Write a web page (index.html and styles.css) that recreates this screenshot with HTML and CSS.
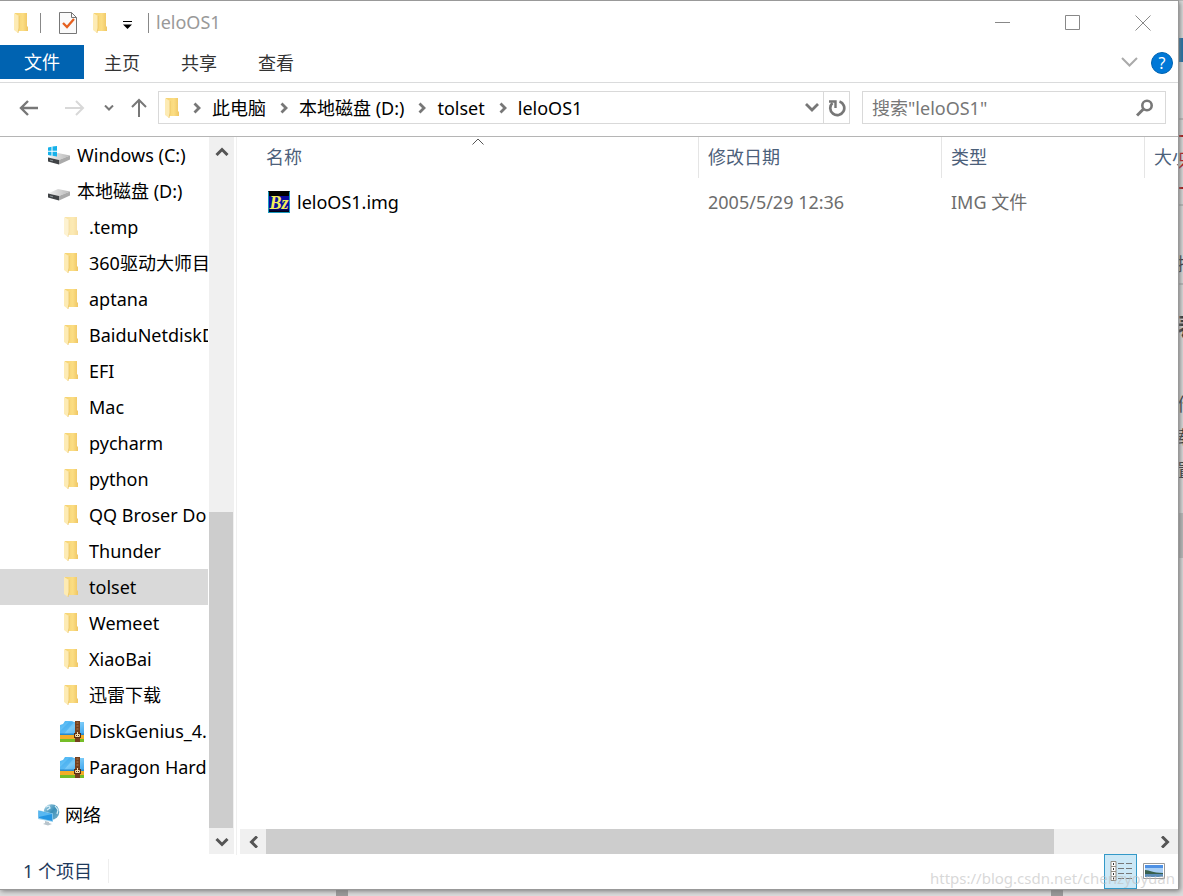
FILE: index.html
```html
<!DOCTYPE html>
<html lang="zh-CN">
<head>
<meta charset="utf-8">
<title>leloOS1</title>
<link rel="stylesheet" href="styles.css">
</head>
<body>
<svg class="defs" aria-hidden="true">
  <defs>
    <linearGradient id="gold" x1="0" x2="1"><stop offset="0" stop-color="#f5d272"/><stop offset=".6" stop-color="#fbdd83"/><stop offset="1" stop-color="#efc664"/></linearGradient>
    <linearGradient id="metal" x1="0" x2="1"><stop offset="0" stop-color="#f1f1f1"/><stop offset="1" stop-color="#b9b9b9"/></linearGradient>
    <linearGradient id="sky" x1="0" x2="1" y2="1"><stop offset="0" stop-color="#43b1f2"/><stop offset=".5" stop-color="#7bcbf8"/><stop offset="1" stop-color="#3aa2ec"/></linearGradient>
    <linearGradient id="globe" x1="0" x2="1" y2="1"><stop offset="0" stop-color="#b8dceb"/><stop offset=".5" stop-color="#3b8fb8"/><stop offset="1" stop-color="#7fb4cc"/></linearGradient>
  </defs>
  <symbol id="folder" viewBox="0 0 14 22"><path d="M1 1h12v13l1 1v4H4L1 17z" fill="url(#gold)"/><path d="M0 1l5 3v12l-1 5-4-3z" fill="#fdebb4"/><path d="M5 4v12l-1 5" fill="none" stroke="#eac15d" stroke-width=".7"/></symbol>
  <symbol id="drive" viewBox="0 0 22 24"><path d="M0 14.500 10 10l12 2.500L11 17z" fill="url(#metal)"/><path d="M0 14.500 11 17v4.500L0 18.500z" fill="#404346"/><path d="M11 17l11-4.500v4L11 21.500z" fill="#aaa"/><path d="M2 17l3 .8" stroke="#8a9398"/></symbol>
  <symbol id="archive" viewBox="0 0 24 22"><path d="M0 5l3-1 2-3h7l2 1h10v13H0z" fill="url(#sky)"/><path d="M0 11 9 2h5L4 14H0z" fill="#2da0ec" opacity=".4"/><path d="M0 13.500h24V16H0z" fill="#2489cf"/><path d="M0 15h24v4H0z" fill="#f3ad28"/><path d="M0 19h24v3H0z" fill="#75bd28"/><path d="M15 1h5v21h-5z" fill="#74401f"/><path d="M16.500 3h2M16.500 6h2M16.500 9h2" stroke="#b28053"/><path d="M14 13h7v5h-7z" fill="#5a2d13"/><path d="M15.500 14.500h4v2h-4zM17.500 12v5" fill="none" stroke="#f5e0b0"/></symbol>
  <symbol id="crumb" viewBox="0 0 8 12"><path d="M1.500 1.500 6 6l-4.500 4.500" fill="none" stroke="#777" stroke-width="2.800"/></symbol>
</svg>

<div class="backdrop" aria-hidden="true">
  <i class="shade shade-a"></i><i class="shade shade-b"></i><i class="shade shade-c"></i><i class="shade shade-d"></i><i class="shade shade-e"></i>
  <i class="shade shade-f"></i><i class="shade shade-g"></i><i class="shade shade-h"></i><i class="shade shade-i"></i>
  <span class="scrap scrap-red">只</span><span class="scrap scrap-a">描</span><span class="scrap scrap-b">表</span><span class="scrap scrap-c">作</span><span class="scrap scrap-d">载</span><span class="scrap scrap-e">置</span>
</div>

<div class="window">
  <header class="titlebar">
    <svg class="i-folder"><use href="#folder"/></svg>
    <span class="bar bar-left"></span>
    <button class="plain props" aria-label="属性"><svg width="18" height="22" viewBox="0 0 18 22"><path d="M.5.500h12l5 5v16H.500z" fill="#fafafa" stroke="#777"/><path d="M12.500.5v5h5" fill="none" stroke="#777"/><path d="M4 11l4 4 7-8" fill="none" stroke="#e6601f" stroke-width="2.300"/></svg></button>
    <button class="plain newdir" aria-label="新建文件夹"><svg class="i-folder"><use href="#folder"/></svg></button>
    <button class="plain qat" aria-label="自定义快速访问工具栏"><svg width="9" height="8" viewBox="0 0 9 8"><path d="M0 .5h9" stroke="#000"/><path d="M0 3.500h9L4.500 8z"/></svg></button>
    <span class="bar bar-title"></span>
    <h1 class="title">leloOS1</h1>
    <div class="caption">
      <button class="plain" aria-label="最小化"><svg width="16" height="16" viewBox="0 0 16 16"><path d="M0 7.500h15" stroke="#888"/></svg></button>
      <button class="plain" aria-label="最大化"><svg width="16" height="16" viewBox="0 0 16 16"><path d="M.5.500h14v14H.500z" fill="none" stroke="#888"/></svg></button>
      <button class="plain" aria-label="关闭"><svg width="16" height="16" viewBox="0 0 16 16"><path d="M.5.500l15 15m0-15-15 15" stroke="#888"/></svg></button>
    </div>
  </header>

  <nav class="ribbon">
    <button class="tab tab-file">文件</button>
    <button class="tab">主页</button>
    <button class="tab">共享</button>
    <button class="tab">查看</button>
    <button class="plain expand" aria-label="展开功能区"><svg width="17" height="10" viewBox="0 0 17 10"><path d="M1 1l7.500 7.500L16 1" fill="none" stroke="#aaa" stroke-width="2"/></svg></button>
    <button class="help" aria-label="帮助">?</button>
  </nav>

  <div class="location">
    <button class="plain back" aria-label="后退"><svg width="20" height="16" viewBox="0 0 20 16"><path d="M19 8H2M9 1 2 8l7 7" fill="none" stroke="#777" stroke-width="2.400"/></svg></button>
    <button class="plain forward" aria-label="前进"><svg width="20" height="16" viewBox="0 0 20 16"><path d="M0 8h18M11 1l7 7-7 7" fill="none" stroke="#d8d8d8" stroke-width="2"/></svg></button>
    <button class="plain recent" aria-label="最近浏览的位置"><svg width="10" height="6" viewBox="0 0 10 6"><path d="M1 .5l4 4 4-4" fill="none" stroke="#777" stroke-width="2"/></svg></button>
    <button class="plain up" aria-label="上移"><svg width="16" height="20" viewBox="0 0 16 20"><path d="M8 19V2M1 9l7-7 7 7" fill="none" stroke="#777" stroke-width="2"/></svg></button>
    <div class="address">
      <svg class="i-folder"><use href="#folder"/></svg>
      <svg class="i-crumb"><use href="#crumb"/></svg><a href="#">此电脑</a>
      <svg class="i-crumb"><use href="#crumb"/></svg><a href="#">本地磁盘 (D:)</a>
      <svg class="i-crumb"><use href="#crumb"/></svg><a href="#">tolset</a>
      <svg class="i-crumb"><use href="#crumb"/></svg><a href="#">leloOS1</a>
      <button class="plain drop" aria-label="历史记录"><svg width="14" height="9" viewBox="0 0 14 9"><path d="M1 1l6 6 6-6" fill="none" stroke="#777" stroke-width="2.800"/></svg></button>
      <button class="plain refresh" aria-label="刷新"><svg width="18" height="18" viewBox="0 0 18 18"><path d="M11.500 2.500a7 7 0 1 1-7 1.500" fill="none" stroke="#777" stroke-width="2.700"/><path d="M1 2.500h6.500V9" fill="none" stroke="#777" stroke-width="2.400"/></svg></button>
    </div>
    <label class="search"><input type="text" placeholder='搜索"leloOS1"' aria-label="搜索">
      <svg width="18" height="18" viewBox="0 0 18 18"><circle cx="11" cy="6.500" r="4.700" fill="none" stroke="#777" stroke-width="2.600"/><path d="M7.500 10 1 16.500" stroke="#777" stroke-width="3"/></svg></label>
  </div>

  <div class="body">
    <nav class="tree">
      <a class="node disk" href="#"><svg class="i-drive" viewBox="0 0 22 24"><use href="#drive" width="22" height="24"/><path d="M0 4.500l3.500-.7v4H0zM4.500 3.600 9 3v4.800H4.500zM0 8.700h3.500v4L0 12zM4.500 8.700H9v4.800l-4.500-.7z" fill="#16b1ea"/></svg>Windows (C:)</a>
      <a class="node disk" href="#"><svg class="i-drive"><use href="#drive"/></svg>本地磁盘 (D:)</a>
      <a class="node faded" href="#"><svg class="i-folder"><use href="#folder"/></svg>.temp</a>
      <a class="node" href="#"><svg class="i-folder"><use href="#folder"/></svg>360驱动大师目</a>
      <a class="node" href="#"><svg class="i-folder"><use href="#folder"/></svg>aptana</a>
      <a class="node" href="#"><svg class="i-folder"><use href="#folder"/></svg>BaiduNetdiskD</a>
      <a class="node" href="#"><svg class="i-folder"><use href="#folder"/></svg>EFI</a>
      <a class="node" href="#"><svg class="i-folder"><use href="#folder"/></svg>Mac</a>
      <a class="node" href="#"><svg class="i-folder"><use href="#folder"/></svg>pycharm</a>
      <a class="node" href="#"><svg class="i-folder"><use href="#folder"/></svg>python</a>
      <a class="node" href="#"><svg class="i-folder"><use href="#folder"/></svg>QQ Broser Do</a>
      <a class="node" href="#"><svg class="i-folder"><use href="#folder"/></svg>Thunder</a>
      <a class="node selected" href="#"><svg class="i-folder"><use href="#folder"/></svg>tolset</a>
      <a class="node" href="#"><svg class="i-folder"><use href="#folder"/></svg>Wemeet</a>
      <a class="node" href="#"><svg class="i-folder"><use href="#folder"/></svg>XiaoBai</a>
      <a class="node" href="#"><svg class="i-folder"><use href="#folder"/></svg>迅雷下载</a>
      <a class="node zip" href="#"><svg class="i-archive"><use href="#archive"/></svg>DiskGenius_4.</a>
      <a class="node zip" href="#"><svg class="i-archive"><use href="#archive"/></svg>Paragon Hard</a>
      <a class="node network" href="#"><svg width="22" height="22" viewBox="0 0 22 22"><circle cx="13.500" cy="8" r="7.800" fill="url(#globe)"/><path d="M8 3l3-1 1 2-3 2M17 2l3 4-1 4" fill="none" stroke="#d6eef6" stroke-width="1.200"/><path d="M0 6l15 3.500v8.500L0 15z" fill="#9ed4ef"/><path d="M.7 7l13.600 3.100v7L.7 14z" fill="#2596e3"/><path d="M.7 7l13.600 3.100L.7 13z" fill="#58b8f2"/><path d="M7 17l4 1v1l3 1-4 1.500-5-1.500 2-1z" fill="#b8c4cb"/></svg>网络</a>
    </nav>
    <div class="scroll scroll-y">
      <button class="plain" aria-label="向上滚动"><svg width="14" height="9" viewBox="0 0 14 9"><path d="M1.500 8 7 2.500 12.500 8" fill="none" stroke="#555" stroke-width="3"/></svg></button>
      <span class="track-y-before"></span><span class="thumb thumb-y"></span>
      <button class="plain" aria-label="向下滚动"><svg width="14" height="9" viewBox="0 0 14 9"><path d="M1.500 1 7 6.500 12.500 1" fill="none" stroke="#555" stroke-width="3"/></svg></button>
    </div>
    <main class="content">
      <div class="list">
        <table>
          <colgroup><col class="c-name"><col class="c-date"><col class="c-type"><col class="c-size"></colgroup>
          <thead><tr>
            <th><svg class="sort" width="12" height="7" viewBox="0 0 12 7"><path d="M.5 6.500 6 1l5.500 5.500" fill="none" stroke="#555"/></svg>名称</th><th>修改日期</th><th>类型</th><th>大小</th>
          </tr></thead>
          <tbody><tr>
            <td><a class="file" href="#"><span class="bz">Bz</span>leloOS1.img</a></td><td>2005/5/29 12:36</td><td>IMG 文件</td><td></td>
          </tr></tbody>
        </table>
      </div>
      <div class="scroll scroll-x">
        <button class="plain" aria-label="向左滚动"><svg width="9" height="12" viewBox="0 0 9 12"><path d="M8 .5 2.500 6 8 11.500" fill="none" stroke="#555" stroke-width="3"/></svg></button>
        <span class="thumb thumb-x"></span><span class="track-x-after"></span>
        <button class="plain" aria-label="向右滚动"><svg width="9" height="12" viewBox="0 0 9 12"><path d="M1 .5 6.500 6 1 11.500" fill="none" stroke="#555" stroke-width="3"/></svg></button>
      </div>
    </main>
  </div>

  <footer class="status">
    <span class="count">1 个项目</span>
    <button class="view view-on" aria-label="详细信息"><svg width="22" height="22" viewBox="0 0 22 22"><path d="M1 1.500h5v5H1zM1 6.500h5v5H1zM1 11.500h5v5H1zM1 16.500h5v4H1z" fill="#fff" stroke="#928c82"/><path d="M3 4h1M3 9h1M3 14h1M3 18.500h1" stroke="#333" stroke-width="2"/><path d="M8 3.500h6m2 0h6M8 8.500h6m2 0h6M8 13.500h6m2 0h6M8 18.500h6m2 0h6" stroke="#777"/></svg></button>
    <button class="view" aria-label="大图标"><svg width="22" height="16" viewBox="0 0 22 16"><path d="M.5.500h21v15H.500z" fill="#fff" stroke="#999"/><path d="M2 2h18v12H2z" fill="#a9cff5"/><path d="M2 2h18v3H2z" fill="#4f91e4"/><path d="M2 7c5 0 7 3 18 3v1H2z" fill="#38604e"/><path d="M2 11h18v3H2z" fill="#5c8db8"/></svg></button>
  </footer>
</div>
<p class="watermark">https://blog.csdn.net/chenzyoyuan</p>
</body>
</html>
```
FILE: styles.css
```css
* { box-sizing: border-box; }
body {
  margin: 0;
  height: 100vh;
  padding: 1px 4px 6px 0;
  position: relative;
  overflow: hidden;
  background: #dcdcdc;
  font: 18px/24px "Noto Sans", "Noto Sans CJK SC", sans-serif;
  color: #000;
}
button, input { font: inherit; color: inherit; }
a { color: inherit; text-decoration: none; }
svg { display: block; flex: none; }
.defs { position: absolute; width: 0; height: 0; }
.plain { display: flex; align-items: center; justify-content: center; padding: 0; border: 0; background: none; }
.i-folder { width: 14px; height: 22px; }
.i-drive { width: 22px; height: 24px; }
.i-archive { width: 24px; height: 22px; }
.i-crumb { width: 8px; height: 12px; margin: 0 11px 0 14px; }

/* page visible around the window */
.backdrop { position: absolute; inset: 0; overflow: hidden; background: linear-gradient(90deg, #555 0 90px, #822 90px 120px, #666 120px 450px, #a33 450px 490px, #666 490px 660px, #3d68a0 660px 822px, #bbb 822px) top / 100% 1px no-repeat; }
.shade { position: absolute; right: 0; width: 4px; height: 2px; background: #bbb; }
.shade-a { top: 38px; height: 24px; background: #176da5; }
.shade-b { top: 135px; background: #a11; }
.shade-c { top: 187px; background: #a11; }
.shade-d { top: 283px; }
.shade-e { top: 513px; height: 45px; }
.shade-f { top: 118px; }
.shade-g { top: 204px; }
.shade-h, .shade-i { top: auto; bottom: 0; height: 6px; width: 12px; background: #999; }
.shade-h { right: auto; left: 336px; }
.shade-i { right: 120px; }
.scrap { position: absolute; right: -12px; color: #333; }
.scrap-red { top: 148px; color: #b11; }
.scrap-a { top: 252px; }
.scrap-b { top: 314px; font-size: 24px; font-weight: bold; right: -18px; }
.scrap-c { top: 392px; }
.scrap-d { top: 425px; }
.scrap-e { top: 458px; }

.window {
  position: relative;
  height: 100%;
  display: flex;
  flex-direction: column;
  background: #fff;
  border-right: 1px solid #999;
  border-bottom: 1px solid #999;
  box-shadow: 0 -1px 0 #999, 1px 1px 5px #777;
}
.titlebar { display: flex; align-items: center; height: 44px; padding-left: 14px; }
.bar { width: 1px; height: 20px; background: #888; }
.bar-left { margin: 0 18px 0 12px; }
.newdir { margin-left: 16px; }
.qat { margin: 3px 16px 0; }
.title { margin: 0 0 2px 7px; font-size: 18px; font-weight: 400; color: #999; }
.caption { display: flex; gap: 54px; margin-left: auto; padding-right: 27px; }

.ribbon { display: flex; align-items: center; height: 38px; padding-bottom: 4px; border-bottom: 1px solid #dadbdc; }
.tab { height: 34px; padding: 2px 20px 0; border: 0; margin-right: 1px; background: none; color: #333; }
.tab-file { padding: 0 24px; margin: 0; background: #0063b1; color: #fff; }
.expand { margin-left: auto; }
.help { width: 22px; height: 22px; margin: 2px 5px 0 13px; padding: 0; border: 1px solid #0063b1; border-radius: 50%; background: #0078d7; color: #fff; font-size: 16px; line-height: 20px; }

.location { display: flex; align-items: center; height: 54px; padding: 0 12px 4px 19px; border-bottom: 1px solid #b5b5b5; }
.forward { margin-left: 26px; }
.recent { margin-left: 19px; }
.up { margin: 0 11px 0 17px; }
.address { flex: 1; min-width: 0; display: flex; align-items: center; height: 33px; padding-left: 6px; border: 1px solid #d9d9d9; white-space: nowrap; }
.drop { margin-left: auto; margin-right: 4px; }
.refresh { width: 26px; height: 31px; border-left: 1px solid #d9d9d9; }
.search { flex: 0 1 304px; display: flex; align-items: center; height: 33px; margin-left: 12px; padding: 0 11px 0 9px; border: 1px solid #d9d9d9; }
.search input { flex: 1; min-width: 0; padding: 0; border: 0; outline: 0; background: none; }
.search input::placeholder { color: #777; opacity: 1; }

.body { flex: 1; min-height: 0; display: flex; }
.tree { width: 208px; overflow: hidden; }
.node { display: flex; align-items: center; gap: 11px; height: 36px; padding-left: 64px; white-space: nowrap; }
.node.disk { gap: 7px; padding-left: 48px; }
.node.zip { gap: 5px; padding-left: 60px; }
.node.network { gap: 5px; margin-top: 12px; padding-left: 38px; }
.node.selected { background: #d9d9d9; }
.node.faded svg { opacity: .6; }
.scroll { display: flex; background: #f0f0f0; }
.thumb { background: #cdcdcd; }
.scroll-y { flex: none; flex-direction: column; width: 25px; margin: 0 2px 1px 1px; }
.scroll-y .plain { height: 26px; padding-top: 3px; }
.track-y-before { flex: 349; }
.thumb-y { flex: 316; margin-right: 1px; }
.content { flex: 1; min-width: 0; display: flex; flex-direction: column; border-left: 1px solid #f0f0f0; }
.list { flex: 1; min-height: 0; overflow: hidden; padding-left: 20px; }
.scroll-x { height: 25px; margin: 0 0 1px 3px; }
.scroll-x .plain { width: 26px; }
.thumb-x { flex: 788; }
.track-x-after { flex: 98; }

table { width: 988px; table-layout: fixed; border-collapse: separate; border-spacing: 0; }
.c-name { width: 442px; }
.c-date { width: 243px; }
.c-type { width: 203px; }
th { position: relative; height: 41px; padding: 0 9px 2px; border-right: 1px solid #e5e5e5; text-align: left; font-weight: 400; color: #4c607a; }
td { height: 47px; padding: 0 9px; color: #6d6d6d; }
.sort { position: absolute; top: 1px; left: 50%; margin-left: -6px; }
.file { display: flex; align-items: center; gap: 7px; padding-left: 2px; color: #000; }
.bz { width: 22px; height: 22px; border: 1px solid #1b9ac0; border-top-color: #000; background: linear-gradient(#000 0 4px, #0a0aa0 4px 16px, #000); color: #f3ee5b; font: italic bold 18px/22px "Liberation Serif", serif; text-align: center; }

.status { display: flex; align-items: center; height: 34px; padding: 0 8px 2px 23px; color: #1e395b; }
.count { padding-right: 16px; border-right: 1px solid #eee; margin-right: auto; }
.view { display: flex; align-items: center; justify-content: center; width: 33px; height: 35px; padding: 0; border: 1px solid transparent; background: none; }
.view-on { border-color: #3399c8; background: #cce8f6; }
.watermark { position: absolute; right: 8px; bottom: 6px; margin: 0; font-size: 15px; color: rgba(190, 190, 190, .6); }
```
